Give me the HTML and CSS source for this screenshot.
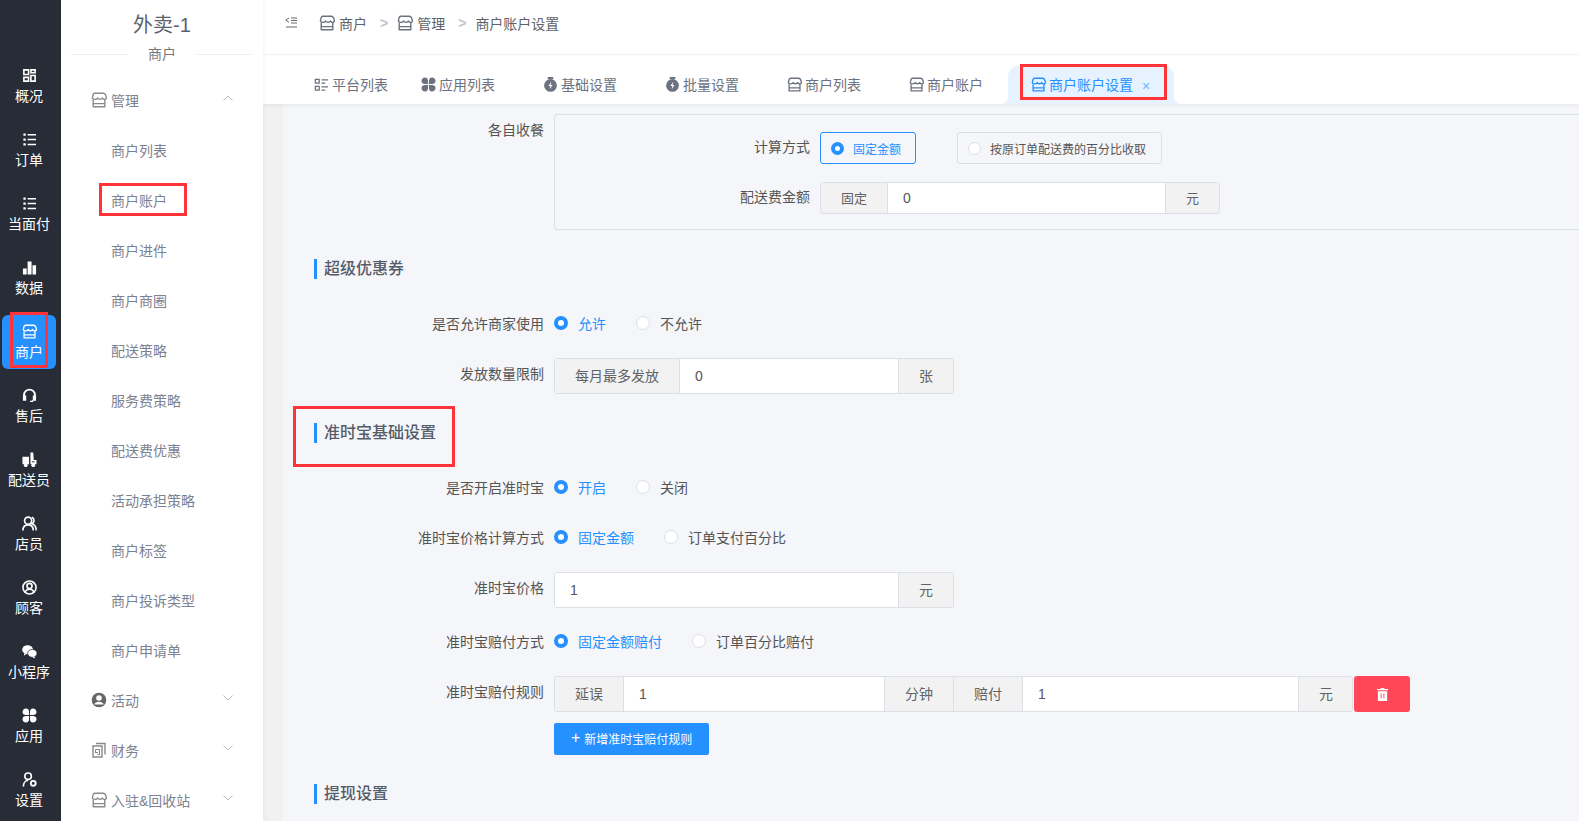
FILE: index.html
```html
<!DOCTYPE html>
<html lang="zh-CN">
<head>
<meta charset="utf-8">
<title>商户账户设置</title>
<link rel="stylesheet" href="styles.css">
</head>
<body>
<svg class="sprite" xmlns="http://www.w3.org/2000/svg">
  <symbol id="i-store" viewBox="0 0 16 16"><path d="M3.800 1.300h8.400c1.800 0 2.800 1.800 3.200 4.800-.4 1.700-3.300 1.900-4-.2-.6 1.700-4.200 1.800-4.800 0-.7 1.900-4.300 1.900-5.200.2.400-3 .7-4.800 2.400-4.800zM2.200 8v6.800h11.600V8M2.200 11.600h11.600" fill="none" stroke="currentColor" stroke-width="1.400" stroke-linejoin="round"/></symbol>
  <symbol id="i-grid" viewBox="0 0 16 16"><path d="M2 2h5v5H2zM9.500 2H14v3H9.500zM2 10h5v4H2zM9.500 8H14v6H9.500z" fill="none" stroke="currentColor" stroke-width="1.700"/></symbol>
  <symbol id="i-list" viewBox="0 0 16 16"><path d="M1.500 1.500h2.500v2.500H1.500zM1.500 6.800h2.500v2.500H1.500zM1.500 12h2.500v2.500H1.500z" fill="currentColor"/><path d="M6 2.800h9M6 8h9M6 13.200h9" stroke="currentColor" stroke-width="1.600"/></symbol>
  <symbol id="i-bars" viewBox="0 0 16 16"><path d="M1 9h4v6.500H1zM6 1.500h4.200v14H6zM11.200 5.500H15v10h-3.800z" fill="currentColor"/></symbol>
  <symbol id="i-headset" viewBox="0 0 16 16"><path d="M2.200 10V7.500a5.800 5.800 0 0 1 11.600 0V10" fill="none" stroke="currentColor" stroke-width="2"/><path d="M1 8h3.500v5.500H1zM11.500 8H15v5.500h-3.500zM12 13v2H8.500v-1.400H10.500V13z" fill="currentColor"/></symbol>
  <symbol id="i-cart" viewBox="0 0 16 16"><path d="M.5 5h7v8H.5zM9 .5h3l.5 8h3v4.500H9z" fill="currentColor"/><circle cx="4" cy="14" r="2" fill="currentColor"/><circle cx="12" cy="14" r="2" fill="currentColor"/><path d="M10.500 10.500h3" stroke="#282c36"/></symbol>
  <symbol id="i-users" viewBox="0 0 16 16"><circle cx="6.500" cy="5" r="3.800" fill="none" stroke="currentColor" stroke-width="1.700"/><path d="M1 15.500c0-3.800 2.300-6 5.500-6s5.500 2.200 5.500 6M10.500 1.300a3.800 3.800 0 0 1 0 7c2.700.6 4.500 3.200 4.700 7" fill="none" stroke="currentColor" stroke-width="1.700"/></symbol>
  <symbol id="i-face" viewBox="0 0 16 16"><circle cx="8" cy="8" r="7" fill="none" stroke="currentColor" stroke-width="1.700"/><circle cx="8" cy="6.300" r="2.700" fill="none" stroke="currentColor" stroke-width="1.700"/><path d="M3.300 12.800c1-2.200 2.600-3 4.700-3s3.700.8 4.700 3" fill="none" stroke="currentColor" stroke-width="1.700"/></symbol>
  <symbol id="i-wechat" viewBox="0 0 16 16"><ellipse cx="6" cy="6" rx="5.800" ry="4.800" fill="currentColor"/><ellipse cx="11" cy="10" rx="5" ry="4.200" fill="currentColor" stroke="#282c36" stroke-width=".8"/><path d="M2.500 9.500 2 12.500l3-2zM13 13l1 2.500-3-1.500z" fill="currentColor"/></symbol>
  <symbol id="i-apps" viewBox="0 0 16 16"><path d="M4.300 .5C6.500.5 7.500 2.200 7.500 4.300v3.200H4.300C2.200 7.500.5 6.500.5 4.300S2.200.5 4.300.5zM11.700.5C9.500.5 8.500 2.200 8.500 4.300v3.200h3.200c2.100 0 3.800-1 3.800-3.200S13.800.5 11.700.5zM4.300 15.500c2.200 0 3.200-1.700 3.200-3.800V8.500H4.300C2.200 8.500.5 9.500.5 11.700s1.700 3.800 3.800 3.800zM11.700 15.500c-2.200 0-3.200-1.700-3.200-3.800V8.500h3.200c2.100 0 3.800 1 3.800 3.200s-1.700 3.800-3.800 3.800z" fill="currentColor"/></symbol>
  <symbol id="i-gear" viewBox="0 0 16 16"><circle cx="6.500" cy="4.500" r="3.500" fill="none" stroke="currentColor" stroke-width="1.700"/><path d="M1.500 15.500c0-3.800 2-6.500 5-6.500" fill="none" stroke="currentColor" stroke-width="1.700"/><circle cx="12" cy="12" r="2.600" fill="none" stroke="currentColor" stroke-width="2"/></symbol>
  <symbol id="i-timer" viewBox="0 0 16 16"><path d="M5 0h6v2.200H5z" fill="currentColor"/><circle cx="8" cy="9" r="6.800" fill="currentColor"/><path d="M8.800 5 5.800 9.500h2L7.200 13l3-4.500h-2z" fill="#fff"/></symbol>
  <symbol id="i-filter" viewBox="0 0 16 16"><path d="M1.500 2.500h4v4h-4zM1.500 10h4v4h-4z" fill="none" stroke="currentColor" stroke-width="1.400"/><path d="M8 3h7M8 6.500h4M8 10.500h7M8 14h4" stroke="currentColor" stroke-width="1.400"/></symbol>
  <symbol id="i-person" viewBox="0 0 16 16"><circle cx="8" cy="8" r="7.300" fill="currentColor"/><circle cx="8" cy="6" r="2.800" fill="#fff"/><path d="M3.200 12.500C4 10.500 5.800 9.700 8 9.700s4 .8 4.800 2.800z" fill="#fff"/></symbol>
  <symbol id="i-doc" viewBox="0 0 16 16"><path d="M5 1.500h9v11M2 4h9v11H2z" fill="none" stroke="currentColor" stroke-width="1.400"/><path d="M4.500 7.500h4v5h-2M4.500 7.500v3h2.500" fill="none" stroke="currentColor" stroke-width="1.100"/></symbol>
  <symbol id="i-up" viewBox="0 0 10 6"><path d="M.5 5.500 5 1l4.500 4.500" fill="none" stroke="currentColor"/></symbol>
  <symbol id="i-down" viewBox="0 0 10 6"><path d="M.5.500 5 5 9.500.500" fill="none" stroke="currentColor"/></symbol>
  <symbol id="i-collapse" viewBox="0 0 13 12"><path d="M4 1 .800 3.200 4 5.400" fill="none" stroke="currentColor"/><path d="M6 1h6M6 3.500h6M6 6h6M1 10h11" stroke="currentColor"/></symbol>
  <symbol id="i-trash" viewBox="0 0 14 14"><path d="M5 1V0h4v1h4v1.500H1V1zM2 3.500h10V14H2z" fill="#fff"/><path d="M5.500 6v5M8.500 6v5" stroke="#ff4757"/></symbol>
</svg>

<div class="app">
  <nav class="rail">
    <a class="rail-item"><svg class="rail-icon"><use href="#i-grid"/></svg><span>概况</span></a>
    <a class="rail-item"><svg class="rail-icon"><use href="#i-list"/></svg><span>订单</span></a>
    <a class="rail-item"><svg class="rail-icon"><use href="#i-list"/></svg><span>当面付</span></a>
    <a class="rail-item"><svg class="rail-icon"><use href="#i-bars"/></svg><span>数据</span></a>
    <a class="rail-item rail-item--active"><svg class="rail-icon"><use href="#i-store"/></svg><span>商户</span></a>
    <a class="rail-item"><svg class="rail-icon"><use href="#i-headset"/></svg><span>售后</span></a>
    <a class="rail-item"><svg class="rail-icon"><use href="#i-cart"/></svg><span>配送员</span></a>
    <a class="rail-item"><svg class="rail-icon"><use href="#i-users"/></svg><span>店员</span></a>
    <a class="rail-item"><svg class="rail-icon"><use href="#i-face"/></svg><span>顾客</span></a>
    <a class="rail-item"><svg class="rail-icon"><use href="#i-wechat"/></svg><span>小程序</span></a>
    <a class="rail-item"><svg class="rail-icon"><use href="#i-apps"/></svg><span>应用</span></a>
    <a class="rail-item"><svg class="rail-icon"><use href="#i-gear"/></svg><span>设置</span></a>
  </nav>

  <aside class="side">
    <h1 class="side-title">外卖-1</h1>
    <div class="side-divider"><span>商户</span></div>
    <ul class="menu">
      <li class="menu-group"><svg class="menu-icon"><use href="#i-store"/></svg><span>管理</span><svg class="menu-arrow"><use href="#i-up"/></svg></li>
      <li class="menu-item">商户列表</li>
      <li class="menu-item"><span class="menu-mark">商户账户</span></li>
      <li class="menu-item">商户进件</li>
      <li class="menu-item">商户商圈</li>
      <li class="menu-item">配送策略</li>
      <li class="menu-item">服务费策略</li>
      <li class="menu-item">配送费优惠</li>
      <li class="menu-item">活动承担策略</li>
      <li class="menu-item">商户标签</li>
      <li class="menu-item">商户投诉类型</li>
      <li class="menu-item">商户申请单</li>
      <li class="menu-group"><svg class="menu-icon menu-icon--dark"><use href="#i-person"/></svg><span>活动</span><svg class="menu-arrow"><use href="#i-down"/></svg></li>
      <li class="menu-group"><svg class="menu-icon"><use href="#i-doc"/></svg><span>财务</span><svg class="menu-arrow"><use href="#i-down"/></svg></li>
      <li class="menu-group"><svg class="menu-icon"><use href="#i-store"/></svg><span>入驻&amp;回收站</span><svg class="menu-arrow"><use href="#i-down"/></svg></li>
    </ul>
  </aside>

  <div class="page">
    <header class="topbar">
      <svg class="collapse"><use href="#i-collapse"/></svg>
      <div class="crumbs">
        <svg class="crumb-icon"><use href="#i-store"/></svg><span>商户</span>
        <b class="crumb-sep">&gt;</b>
        <svg class="crumb-icon"><use href="#i-store"/></svg><span>管理</span>
        <b class="crumb-sep crumb-sep--last">&gt;</b>
        <span>商户账户设置</span>
      </div>
    </header>

    <div class="tabs">
      <div class="tab tab--first"><svg class="tab-icon"><use href="#i-filter"/></svg><span>平台列表</span></div>
      <div class="tab"><svg class="tab-icon"><use href="#i-apps"/></svg><span>应用列表</span></div>
      <div class="tab"><svg class="tab-icon"><use href="#i-timer"/></svg><span>基础设置</span></div>
      <div class="tab"><svg class="tab-icon"><use href="#i-timer"/></svg><span>批量设置</span></div>
      <div class="tab"><svg class="tab-icon"><use href="#i-store"/></svg><span>商户列表</span></div>
      <div class="tab tab--near"><svg class="tab-icon"><use href="#i-store"/></svg><span>商户账户</span></div>
      <div class="tab tab--active"><svg class="tab-icon"><use href="#i-store"/></svg><span>商户账户设置</span><span class="tab-close">×</span></div>
    </div>

    <main class="main">
      <div class="form">
        <div class="row row--box">
          <label class="label">各自收餐</label>
          <div class="box">
            <div class="box-row">
              <label class="box-label">计算方式</label>
              <div class="radio-btn radio-btn--on"><i class="dot dot--on dot--small"></i>固定金额</div>
              <div class="radio-btn"><i class="dot dot--small"></i>按原订单配送费的百分比收取</div>
            </div>
            <div class="box-row box-row--last">
              <label class="box-label">配送费金额</label>
              <div class="group group--small">
                <div class="addon">固定</div>
                <div class="field">0</div>
                <div class="addon">元</div>
              </div>
            </div>
          </div>
        </div>

        <h2 class="section">超级优惠券</h2>
        <div class="row row--radio">
          <label class="label">是否允许商家使用</label>
          <div class="radios"><span class="radio radio--on"><i class="dot dot--on"></i>允许</span><span class="radio"><i class="dot"></i>不允许</span></div>
        </div>
        <div class="row">
          <label class="label">发放数量限制</label>
          <div class="group">
            <div class="addon">每月最多发放</div>
            <div class="field">0</div>
            <div class="addon">张</div>
          </div>
        </div>

        <h2 class="section section--marked">准时宝基础设置</h2>
        <div class="row row--radio row--loose">
          <label class="label">是否开启准时宝</label>
          <div class="radios"><span class="radio radio--on"><i class="dot dot--on"></i>开启</span><span class="radio"><i class="dot"></i>关闭</span></div>
        </div>
        <div class="row row--radio">
          <label class="label">准时宝价格计算方式</label>
          <div class="radios"><span class="radio radio--on"><i class="dot dot--on"></i>固定金额</span><span class="radio"><i class="dot"></i>订单支付百分比</span></div>
        </div>
        <div class="row">
          <label class="label">准时宝价格</label>
          <div class="group">
            <div class="field">1</div>
            <div class="addon">元</div>
          </div>
        </div>
        <div class="row row--radio">
          <label class="label">准时宝赔付方式</label>
          <div class="radios"><span class="radio radio--on"><i class="dot dot--on"></i>固定金额赔付</span><span class="radio"><i class="dot"></i>订单百分比赔付</span></div>
        </div>
        <div class="row row--tight">
          <label class="label">准时宝赔付规则</label>
          <div class="group group--rule">
            <div class="addon">延误</div>
            <div class="field field--delay">1</div>
            <div class="addon">分钟</div>
            <div class="addon">赔付</div>
            <div class="field field--pay">1</div>
            <div class="addon addon--fill">元</div>
          </div>
          <button class="del"><svg class="del-icon"><use href="#i-trash"/></svg></button>
        </div>
        <div class="row row--add">
          <span class="label"></span>
          <button class="add"><span class="add-plus">+</span>新增准时宝赔付规则</button>
        </div>

        <h2 class="section">提现设置</h2>
      </div>
    </main>
  </div>
</div>
</body>
</html>
```

FILE: styles.css
```css
*, *::before, *::after { box-sizing: border-box; }
html, body { margin: 0; height: 100%; overflow: hidden; }
body {
  font-family: "Liberation Sans", "Noto Sans CJK SC", sans-serif;
  font-size: 14px;
  color: #555;
  background: #fff;
}
.sprite { position: absolute; width: 0; height: 0; }
.app { display: flex; height: 821px; overflow: hidden; }

/* dark rail */
.rail {
  flex: none;
  display: flex;
  flex-direction: column;
  gap: 10px;
  width: 61px;
  padding: 59px 5px 0 2px;
  background: #282c36;
  color: #fff;
}
.rail-item {
  flex: none;
  display: flex;
  flex-direction: column;
  align-items: center;
  gap: 3px;
  position: relative;
  width: 54px;
  height: 54px;
  padding-top: 9px;
  line-height: 20px;
  border-radius: 6px;
  white-space: nowrap;
}
.rail-item--active { background: #2590ff; }
.rail-item--active::after {
  content: "";
  position: absolute;
  left: 8px;
  top: -3px;
  width: 38px;
  height: 56px;
  border: 3px solid #ff3338;
}
.rail-icon { display: block; width: 15px; height: 15px; flex: none; }

/* secondary side */
.side {
  flex: none;
  width: 202px;
  background: #fff;
  color: #7d8290;
  position: relative;
  z-index: 2;
  box-shadow: 1px 0 4px rgba(0, 0, 0, .05);
}
.side-title {
  margin: 0;
  height: 47px;
  padding-top: 12px;
  font-size: 20px;
  line-height: 26px;
  font-weight: 400;
  text-align: center;
  color: #5a6170;
}
.side-divider {
  display: flex;
  justify-content: center;
  height: 29px;
  margin: 0 10px;
  background: linear-gradient(#f0f0f0, #f0f0f0) 0 7px / 100% 1px no-repeat;
  line-height: 14px;
}
.side-divider span { padding: 0 20px; background: #fff; height: 16px; color: #777; }
.menu { list-style: none; margin: 0; padding: 0; }
.menu-group {
  display: flex;
  align-items: center;
  height: 50px;
  padding: 0 30px 2px 30px;
}
.menu-icon { width: 16px; height: 16px; margin-right: 4px; color: #8a8a8a; flex: none; }
.menu-icon--dark { color: #666; }
.menu-arrow { width: 10px; height: 6px; margin-left: auto; margin-top: -4px; color: #bbb; }
.menu-item { height: 50px; line-height: 50px; padding-left: 50px; }
.menu-mark { position: relative; display: inline-block; line-height: 48px; }
.menu-mark::after {
  content: "";
  position: absolute;
  left: -12px;
  top: 6px;
  width: 88px;
  height: 33px;
  border: 3px solid #ff3338;
}

/* header and tabs */
.page { flex: 1; min-width: 0; display: flex; flex-direction: column; }
.topbar {
  flex: none;
  display: flex;
  align-items: center;
  height: 55px;
  padding: 0 0 8px 22px;
  border-bottom: 1px solid #f2f2f2;
  color: #606266;
}
.collapse { width: 13px; height: 12px; color: #666; margin-right: 21px; }
.crumbs { display: flex; align-items: center; }
.crumb-icon { width: 16px; height: 16px; margin-right: 4px; color: #6c7280; }
.crumb-sep { margin: 0 9px 0 13px; font-weight: 700; color: #c0c4cc; }
.crumb-sep--last { margin-right: 9px; }

.tabs {
  flex: none;
  display: flex;
  align-items: flex-end;
  height: 49px;
  padding-left: 51px;
  color: #6d7280;
  position: relative;
  z-index: 1;
  box-shadow: 0 2px 4px rgba(0, 0, 0, .05);
}
.tab {
  display: flex;
  align-items: center;
  height: 38px;
  padding: 0 48px 2px 0;
  white-space: nowrap;
}
.tab--first { padding-right: 33px; }
.tab--near { padding-right: 25px; }
.tab-icon { width: 15px; height: 15px; margin-right: 3px; flex: none; }
.tab--active {
  position: relative;
  width: 166px;
  padding: 0 0 2px 23px;
  border-radius: 10px 10px 0 0;
  background: #e6f2ff;
  color: #2590ff;
}
.tab--active::before {
  content: "";
  position: absolute;
  left: 12px;
  top: -2px;
  width: 147px;
  height: 36px;
  border: 3px solid #ff3338;
}
.tab--active::after {
  content: "";
  position: absolute;
  left: -8px;
  right: -8px;
  bottom: 0;
  height: 8px;
  background:
    radial-gradient(circle at 0 0, transparent 8px, #e6f2ff 8.5px) left bottom / 8px 8px no-repeat,
    radial-gradient(circle at 100% 0, transparent 8px, #e6f2ff 8.5px) right bottom / 8px 8px no-repeat;
}
.tab-close { margin-left: 9px; font-size: 14px; line-height: 14px; padding-top: 3px; color: #6db3ff; }

/* main form */
.main { flex: 1; min-height: 0; overflow: hidden; background: #f1f1f1; padding-left: 20px; }
.form { height: 100%; background: #f5f6fa; padding-top: 10px; }
.row { display: flex; margin-bottom: 24px; }
.label {
  flex: none;
  width: 261px;
  margin-right: 10px;
  text-align: right;
  line-height: 32px;
  color: #555;
}
.row--radio { height: 20px; }
.row--radio .label { line-height: 20px; }
.row--loose { margin-bottom: 30px; }
.row--box { margin-bottom: 29px; }
.row--tight { margin-bottom: 11px; }
.row--add { margin-bottom: 29px; }

.box {
  flex: 1;
  margin-right: -10px;
  height: 116px;
  padding-top: 17px;
  border: 1px solid #dcdfe6;
  border-radius: 3px;
}
.box-row { display: flex; margin-bottom: 18px; }
.box-row--last { margin-bottom: 0; }
.box-label { width: 255px; margin-right: 10px; text-align: right; line-height: 30px; color: #555; flex: none; }

.radio-btn {
  display: flex;
  align-items: center;
  height: 32px;
  margin-right: 41px;
  padding: 0 15px 0 10px;
  border: 1px solid #dcdfe6;
  border-radius: 3px;
  font-size: 12px;
  color: #555;
}
.radio-btn--on { border-color: #2590ff; color: #2590ff; padding-right: 14px; }

.radios { display: flex; gap: 30px; align-items: center; height: 20px; }
.radio { display: flex; align-items: center; padding-bottom: 2px; color: #555; white-space: nowrap; }
.radio--on { color: #2590ff; }
.dot {
  flex: none;
  width: 14px;
  height: 14px;
  margin-right: 10px;
  border: 1px solid #dcdfe6;
  border-radius: 50%;
  background: #fff;
}
.dot--on { border: 4px solid #2590ff; }
.dot--small { width: 13px; height: 13px; margin-right: 9px; }

.group {
  display: flex;
  width: 400px;
  height: 36px;
  border: 1px solid #dcdfe6;
  border-radius: 3px;
  overflow: hidden;
}
.group--small { height: 32px; font-size: 13px; }
.group--rule { width: 799px; }
.addon {
  flex: none;
  display: flex;
  align-items: center;
  justify-content: center;
  padding: 0 20px 2px;
  background: #f2f2f2;
  color: #606266;
  white-space: nowrap;
}
.addon--fill { flex: 1; }
.field {
  flex: 1;
  min-width: 0;
  display: flex;
  align-items: center;
  padding-left: 15px;
  background: #fff;
  color: #555;
  font-size: 14px;
  border-left: 1px solid #dcdfe6;
  border-right: 1px solid #dcdfe6;
}
.field:first-child { border-left: 0; }
.addon + .addon { border-left: 1px solid #dcdfe6; }
.field--delay { flex: none; width: 262px; }
.field--pay { flex: none; width: 277px; }

.del {
  flex: none;
  display: flex;
  align-items: center;
  justify-content: center;
  width: 56px;
  height: 36px;
  margin-left: 1px;
  padding: 0;
  border: 0;
  border-radius: 3px;
  background: #ff4757;
}
.del-icon { width: 13px; height: 13px; }
.add {
  display: flex;
  align-items: center;
  width: 155px;
  height: 32px;
  padding: 0 0 2px 17px;
  border: 0;
  border-radius: 2px;
  background: #2590ff;
  color: #fff;
  font: 12px "Liberation Sans", "Noto Sans CJK SC", sans-serif;
}
.add-plus { font-size: 16px; font-weight: 400; margin-right: 4px; line-height: 16px; }

.section {
  position: relative;
  margin: 29px 0 35px 31px;
  padding-left: 7px;
  height: 20px;
  border-left: 3px solid #2590ff;
  font-size: 16px;
  line-height: 20px;
  font-weight: 500;
  color: #555c69;
}
.section--marked::after {
  content: "";
  position: absolute;
  left: -24px;
  top: -17px;
  width: 162px;
  height: 61px;
  border: 3px solid #ff3338;
}
```
